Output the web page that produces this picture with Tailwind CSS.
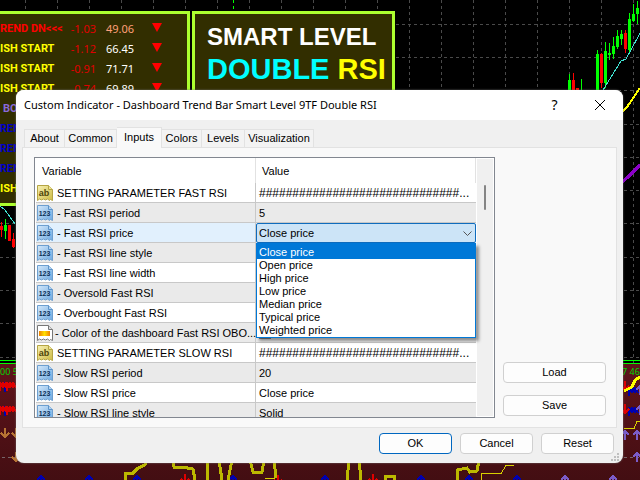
<!DOCTYPE html>
<html lang="en">
<head>
    <meta charset="UTF-8">
    <meta name="viewport" content="width=device-width, initial-scale=1.0">
    <title>Custom Indicator</title>
    <script src="https://cdn.jsdelivr.net/npm/@tailwindcss/browser@4"></script>
</head>
<body class="relative min-h-screen overflow-hidden bg-black font-['Liberation_Sans',Arial,sans-serif] text-[11px] text-black">

    <!-- Shared icons -->
    <svg class="absolute h-0 w-0">
        <defs>
            <linearGradient id="blue" x1="0" y1="0" x2="1" y2="1"><stop offset="0" stop-color="#d3e8fb"/><stop offset="1" stop-color="#6ea9e0"/></linearGradient>
            <linearGradient id="gold" x1="0" y1="0" x2="1" y2="1"><stop offset="0" stop-color="#f8f1b4"/><stop offset="1" stop-color="#cdbb45"/></linearGradient>
            <linearGradient id="swatch" x1="0" x2="1"><stop offset="0" stop-color="#f08000"/><stop offset=".5" stop-color="#ffe000"/><stop offset="1" stop-color="#f08000"/></linearGradient>
            <linearGradient id="redzone" x1="0" y1="0" x2="0" y2="1"><stop offset="0" stop-color="#60131b"/><stop offset="1" stop-color="#430e12"/></linearGradient>
            <symbol id="icon-num" viewBox="0 0 16 16">
                <path d="M.5.5h11l4 4v11l-2-1-1 1-2-1.500-2 1-2-1-2 1-2-1-2 1.500z" fill="url(#blue)" stroke="#6d9fd0"/>
                <path d="M11.500.5v4h4" fill="#b5d4f0" stroke="#5d93c8"/>
                <text x="7.500" y="11" text-anchor="middle" font-family="Liberation Sans" font-size="7" font-weight="bold" fill="#0d3055">123</text>
            </symbol>
            <symbol id="icon-str" viewBox="0 0 16 16">
                <path d="M.5.5h11l4 4v11l-2-1-1 1-2-1.500-2 1-2-1-2 1-2-1-2 1.500z" fill="url(#gold)" stroke="#b5a545"/>
                <path d="M11.500.5v4h4" fill="#efe69a" stroke="#b5a545"/>
                <text x="7" y="11" text-anchor="middle" font-family="Liberation Sans" font-size="9" font-weight="bold" fill="#4e4508">ab</text>
            </symbol>
            <symbol id="icon-color" viewBox="0 0 16 16">
                <path d="M.5.5h11l4 4v11l-2-1-1 1-2-1.500-2 1-2-1-2 1-2-1-2 1.500z" fill="#fff" stroke="#777"/>
                <path d="M11.500.5v4h4" fill="#ddd" stroke="#777"/>
                <rect x="2" y="6" width="11" height="5" fill="url(#swatch)"/>
            </symbol>
            <path id="up" d="M0 10V1M-4 5L0 1L4 5" fill="none" stroke-width="2.500"/>
            <path id="down" d="M0-5V4M-4 0L0 4L4 0" fill="none" stroke-width="2.500"/>
            <path id="bars" d="M0 5V-4l3 6v-6l3 6v-6l3 6" fill="none" stroke-width="2"/>
        </defs>
    </svg>

    <!-- Chart behind the dialog -->
    <svg class="absolute inset-0 h-full w-full" viewBox="0 0 640 480" preserveAspectRatio="xMinYMin slice" shape-rendering="crispEdges">
        <g stroke="#4a4a4a" stroke-dasharray="3 3">
            <path d="M25.500 0V364M57.500 0V364M89.500 0V364M121.500 0V364M153.500 0V364M185.500 0V364M217.500 0V364M249.500 0V364M281.500 0V364M313.500 0V364M345.500 0V364M377.500 0V364M409.500 0V364M441.500 0V364M473.500 0V364M505.500 0V364M537.500 0V364M569.500 0V364M601.500 0V364M633.500 0V364"/>
            <path d="M0 24.500H640M0 57.500H640M0 90.500H640M0 124.500H640M0 157.500H640M0 190.500H640M0 223.500H640M0 257.500H640M0 290.500H640M0 323.500H640M0 357.500H640"/>
            <path d="M233.500 0V90" stroke="#00ff00"/>
        </g>

        <!-- Candles, right -->
        <path d="M569.500 74V90M581.500 79V90M597.500 50V90M605.500 42V88M609.500 43V60M613.500 37V59M617.500 30V49M621.500 30V45M629.500 13V52M633.500 4V22M637.500 1V24" stroke="#00ff00"/>
        <path d="M573.500 73V90M601.500 53V88M625.500 30V53" stroke="#ff0000"/>
        <path d="M568 80h3v10h-3zM596 54h3v36h-3zM604 51h3v32h-3zM608 53h3v2h-3zM612 46h3v8h-3zM616 36h3v11h-3zM620 34h3v5h-3zM628 19h3v31h-3zM632 14h3v7h-3zM636 8h3v6h-3z" fill="#00ff00"/>
        <path d="M572 80h3v10h-3zM576 88h3v2h-3zM600 54h3v29h-3zM624 33h3v16h-3z" fill="#ff0000"/>
        <path d="M603 90L621 61L626 59L631 50L640 33M0 206L5 210L15 224" fill="none" stroke="#40e0d0"/>
        <path d="M622 112L627 107L640 88" fill="none" stroke="#ffff00" stroke-width="2"/>
        <path d="M622 182L628 177L640 165" fill="none" stroke="#8b00c8" stroke-width="3"/>

        <!-- Candles, left -->
        <path d="M1.500 222V237M13.500 233V248" stroke="#ff0000"/>
        <path d="M0 226h3v4h-3zM8 225h3v16h-3zM12 239h3v8h-3z" fill="#ff0000"/>
        <path d="M5.500 219V239" stroke="#00ff00"/>
        <path d="M4 225h3v6h-3z" fill="#00ff00"/>

        <!-- Lower indicator window -->
        <rect y="364" width="640" height="116" fill="url(#redzone)"/>
        <path d="M0 360.500H640M0 363.500H640" stroke="#00ff00"/>
        <path d="M2 457.500H16M624 457.500H640" stroke="#77656a" stroke-dasharray="3 3"/>
        <g fill="#00d800" font-family="Noto Sans" font-size="9">
            <text x="0" y="375">00 5</text>
            <text x="622" y="375">7 46</text>
        </g>
        <g stroke="#0000b0">
            <use href="#up" x="5" y="382"/><use href="#up" x="5" y="406"/>
            <use href="#bars" x="629" y="391"/><use href="#bars" x="629" y="411"/>
            <use href="#up" x="41" y="475"/><use href="#up" x="89" y="475"/><use href="#up" x="137" y="475"/><use href="#up" x="233" y="475"/>
            <use href="#up" x="325" y="475"/><use href="#up" x="421" y="475"/><use href="#up" x="469" y="475"/><use href="#up" x="517" y="475"/>
        </g>
        <g stroke="#e00000">
            <use href="#bars" x="0" y="386"/><use href="#bars" x="7" y="386"/>
            <use href="#bars" x="0" y="410"/><use href="#bars" x="7" y="410"/>
            <use href="#down" x="625" y="386"/><use href="#down" x="625" y="409"/>
            <use href="#down" x="185" y="479"/><use href="#down" x="278" y="480"/><use href="#down" x="373" y="479"/>
        </g>
        <g stroke="#b87333">
            <use href="#down" x="5" y="433"/><use href="#down" x="16" y="433"/><use href="#down" x="16" y="457"/>
        </g>
        <g stroke="#7b5cc8">
            <use href="#up" x="625" y="430"/><use href="#up" x="637" y="430"/><use href="#up" x="637" y="452"/>
            <use href="#up" x="565" y="475"/><use href="#up" x="613" y="475"/><use href="#up" x="640" y="385"/><use href="#up" x="640" y="405"/>
        </g>
        <path d="M624 391L632 387L635 380L640 377" fill="none" stroke="#ffff00" stroke-width="3"/>
        <g fill="none" stroke="#bcb800" stroke-width="3">
            <path d="M125 480V473H133L138 468L145 465L147 460M173 460L174 467H182L193 469L195 480M208 460L207 480M219 460L222 480M228 480L232 460M250 460L253 472H262L264 460M274 460L276 478M349 460L347 480M359 460L361 480M385 480V476H394V480M457 480V470L467 468L470 472L477 471L479 460"/>
            <path d="M89 480H97M265 478.500H275M481 480V473.500H501L506 465.500H514M624 428.500H634L637 421.500H640" stroke="#d8d000" stroke-width="1"/>
        </g>
    </svg>

    <!-- Trend dashboard -->
    <section class="absolute top-[11px] left-0 h-[195px] w-[190px] border-3 border-l-0 border-[#adff2f] bg-[#322e00] pt-[5px] font-['Roboto',sans-serif] text-[11px] leading-5 font-bold whitespace-nowrap text-[#ffff00]">
        <div class="grid grid-cols-[58px_38px_38px_1fr]">
            <span class="text-[#ff0000]">REND DN&lt;&lt;&lt;</span>
            <span class="text-right font-['Noto_Sans',sans-serif] font-normal text-[#e00000]">-1.03</span>
            <span class="text-right font-['Noto_Sans',sans-serif] font-normal text-[#ffa07a]">49.06</span>
            <svg class="mt-1 ml-[18px] h-[9px] w-2.5 fill-[#ff0000]" viewBox="0 0 10 9"><path d="M0 0H10L5 9z"/></svg>

            <span>ISH START</span>
            <span class="text-right font-['Noto_Sans',sans-serif] font-normal text-[#e00000]">-1.12</span>
            <span class="text-right font-['Noto_Sans',sans-serif] font-normal text-white">66.45</span>
            <svg class="mt-1 ml-[18px] h-[9px] w-2.5 fill-[#ff0000]" viewBox="0 0 10 9"><path d="M0 0H10L5 9z"/></svg>

            <span>ISH START</span>
            <span class="text-right font-['Noto_Sans',sans-serif] font-normal text-[#e00000]">-0.91</span>
            <span class="text-right font-['Noto_Sans',sans-serif] font-normal text-white">71.71</span>
            <svg class="mt-1 ml-[18px] h-[9px] w-2.5 fill-[#ff0000]" viewBox="0 0 10 9"><path d="M0 0H10L5 9z"/></svg>

            <span>ISH START</span>
            <span class="text-right font-['Noto_Sans',sans-serif] font-normal text-[#e00000]">-0.74</span>
            <span class="text-right font-['Noto_Sans',sans-serif] font-normal text-white">69.89</span>
            <svg class="mt-1 ml-[18px] h-[9px] w-2.5 fill-[#ff0000]" viewBox="0 0 10 9"><path d="M0 0H10L5 9z"/></svg>
        </div>
        <p class="pl-[3px] text-[#8a6ad8]">BO</p>
        <p class="text-[#0000c8]">REN</p>
        <p class="text-[#0000c8]">REN</p>
        <p class="text-[#0000c8]">REN</p>
        <p>ISH</p>
    </section>

    <section class="absolute top-[11px] left-48 h-24 w-[203px] border-3 border-[#adff2f] bg-[#322e00] pt-[7px] pl-3 font-bold whitespace-nowrap">
        <p class="text-2xl leading-8 text-white">SMART LEVEL</p>
        <p class="text-[29px] leading-8 text-[#00ffff]">DOUBLE <span class="text-[#ffff00]">RSI</span></p>
    </section>

    <!-- Dialog -->
    <main role="dialog" aria-labelledby="title" class="relative mt-[90px] mr-[17px] ml-4 overflow-hidden rounded-lg bg-[#f0f0f0] shadow-[0_0_2px_#777]">
        <header class="flex h-[30px] items-center bg-white pl-2">
            <h1 id="title" class="flex-1 font-['Noto_Sans',sans-serif] text-[11px] whitespace-nowrap">Custom Indicator - Dashboard Trend Bar Smart Level 9TF Double RSI</h1>
            <button aria-label="Help" class="w-[45px] font-['Noto_Sans',sans-serif] text-sm leading-5">?</button>
            <button aria-label="Close" class="flex w-[46px] justify-center">
                <svg class="h-2.5 w-2.5" viewBox="0 0 10 10" stroke="#000"><path d="M0 0L10 10M10 0L0 10"/></svg>
            </button>
        </header>

        <div role="tablist" class="flex h-[27px] items-end pl-2">
            <button role="tab" class="h-[18px] w-[41px] border border-b-0 border-[#e2e2e2] bg-[#f3f3f3]">About</button>
            <button role="tab" class="h-[18px] w-[52px] border border-b-0 border-l-0 border-[#e2e2e2] bg-[#f3f3f3]">Common</button>
            <button role="tab" aria-selected="true" class="relative -mb-px h-[21px] w-[45px] border border-b-0 border-l-0 border-[#e2e2e2] bg-[#f9f9f9] pb-0.5">Inputs</button>
            <button role="tab" class="h-[18px] w-10 border border-b-0 border-l-0 border-[#e2e2e2] bg-[#f3f3f3]">Colors</button>
            <button role="tab" class="h-[18px] w-[43px] border border-b-0 border-l-0 border-[#e2e2e2] bg-[#f3f3f3]">Levels</button>
            <button role="tab" class="h-[18px] w-[69px] border border-b-0 border-l-0 border-[#e2e2e2] bg-[#f3f3f3]">Visualization</button>
        </div>

        <div role="tabpanel" class="mx-1.5 flex gap-2 border border-[#e2e2e2] bg-[#f9f9f9] pt-[9px] pr-2.5 pb-[9px] pl-[11px]">
            <div class="flex h-[261px] min-w-0 flex-1 overflow-hidden border border-[#828790] bg-white pl-px">
                <div class="min-w-0 flex-1">
                    <table class="w-full table-fixed border-separate border-spacing-0 text-left whitespace-nowrap">
                        <colgroup><col class="w-[220px]"><col></colgroup>
                        <thead>
                            <tr class="h-[25px]">
                                <th class="border-r border-[#e2e2e2] pt-px pl-1.5 font-normal">Variable</th>
                                <th class="border-r border-[#e2e2e2] pt-px pl-1.5 font-normal">Value</th>
                            </tr>
                        </thead>
                        <tbody>
                            <tr class="h-5">
                                <td class="border-r border-b border-[#c8c8c8] pt-px"><div class="flex items-center gap-1 pl-px"><svg class="h-4 w-4"><use href="#icon-str"/></svg>SETTING PARAMETER FAST RSI</div></td>
                                <td class="border-b border-[#c8c8c8] pt-px pl-[3px] text-xs">##############################...</td>
                            </tr>
                            <tr class="h-5 bg-[#eaeaea]">
                                <td class="border-r border-b border-[#c8c8c8] pt-px"><div class="flex items-center gap-1 pl-px"><svg class="h-4 w-4"><use href="#icon-num"/></svg>- Fast RSI period</div></td>
                                <td class="border-b border-[#c8c8c8] pt-px pl-[3px]">5</td>
                            </tr>
                            <tr class="h-5 bg-[#e1f0fd]">
                                <td class="border-r border-b border-[#c8c8c8] pt-px"><div class="flex items-center gap-1 pl-px"><svg class="h-4 w-4"><use href="#icon-num"/></svg><label for="price">- Fast RSI price</label></div></td>
                                <td class="relative">
                                    <select id="price" class="block h-5 w-full appearance-none rounded-xs border border-[#0f6cbd] bg-[#cce4f7] pt-px pl-0.5 leading-none">
                                        <option>Close price</option>
                                    </select>
                                    <svg class="pointer-events-none absolute top-2 right-1 h-[5px] w-[9px]" viewBox="0 0 9 5" fill="none" stroke="#555"><path d="M.5.5L4.500 4.500L8.500.5"/></svg>
                                    <ul role="listbox" class="absolute top-full right-0 left-0 z-10 border border-t-3 border-[#0078d7] bg-white leading-[13px] shadow-[3px_3px_3px_#0006]">
                                        <li role="option" aria-selected="true" class="bg-[#0078d7] pl-0.5 text-white">Close price</li>
                                        <li role="option" class="pl-0.5">Open price</li>
                                        <li role="option" class="pl-0.5">High price</li>
                                        <li role="option" class="pl-0.5">Low price</li>
                                        <li role="option" class="pl-0.5">Median price</li>
                                        <li role="option" class="pl-0.5">Typical price</li>
                                        <li role="option" class="pl-0.5">Weighted price</li>
                                    </ul>
                                </td>
                            </tr>
                            <tr class="h-5 bg-[#eaeaea]">
                                <td class="border-r border-b border-[#c8c8c8] pt-px"><div class="flex items-center gap-1 pl-px"><svg class="h-4 w-4"><use href="#icon-num"/></svg>- Fast RSI line style</div></td>
                                <td class="border-b border-[#c8c8c8]"></td>
                            </tr>
                            <tr class="h-5">
                                <td class="border-r border-b border-[#c8c8c8] pt-px"><div class="flex items-center gap-1 pl-px"><svg class="h-4 w-4"><use href="#icon-num"/></svg>- Fast RSI line width</div></td>
                                <td class="border-b border-[#c8c8c8]"></td>
                            </tr>
                            <tr class="h-5 bg-[#eaeaea]">
                                <td class="border-r border-b border-[#c8c8c8] pt-px"><div class="flex items-center gap-1 pl-px"><svg class="h-4 w-4"><use href="#icon-num"/></svg>- Oversold Fast RSI</div></td>
                                <td class="border-b border-[#c8c8c8]"></td>
                            </tr>
                            <tr class="h-5">
                                <td class="border-r border-b border-[#c8c8c8] pt-px"><div class="flex items-center gap-1 pl-px"><svg class="h-4 w-4"><use href="#icon-num"/></svg>- Overbought Fast RSI</div></td>
                                <td class="border-b border-[#c8c8c8]"></td>
                            </tr>
                            <tr class="h-5 bg-[#eaeaea]">
                                <td class="border-r border-b border-[#c8c8c8] pt-px"><div class="flex items-center gap-0.5 pl-px"><svg class="h-4 w-4 shrink-0"><use href="#icon-color"/></svg>- Color of the dashboard Fast RSI OBO...</div></td>
                                <td class="border-b border-[#c8c8c8] pl-[3px]"><div class="h-3 w-3 border border-[#888] bg-white"></div></td>
                            </tr>
                            <tr class="h-5">
                                <td class="border-r border-b border-[#c8c8c8] pt-px"><div class="flex items-center gap-1 pl-px"><svg class="h-4 w-4"><use href="#icon-str"/></svg>SETTING PARAMETER SLOW RSI</div></td>
                                <td class="border-b border-[#c8c8c8] pt-px pl-[3px] text-xs">##############################...</td>
                            </tr>
                            <tr class="h-5 bg-[#eaeaea]">
                                <td class="border-r border-b border-[#c8c8c8] pt-px"><div class="flex items-center gap-1 pl-px"><svg class="h-4 w-4"><use href="#icon-num"/></svg>- Slow RSI period</div></td>
                                <td class="border-b border-[#c8c8c8] pt-px pl-[3px]">20</td>
                            </tr>
                            <tr class="h-5">
                                <td class="border-r border-b border-[#c8c8c8] pt-px"><div class="flex items-center gap-1 pl-px"><svg class="h-4 w-4"><use href="#icon-num"/></svg>- Slow RSI price</div></td>
                                <td class="border-b border-[#c8c8c8] pt-px pl-[3px]">Close price</td>
                            </tr>
                            <tr class="h-5 bg-[#eaeaea]">
                                <td class="border-r border-b border-[#c8c8c8] pt-px"><div class="flex items-center gap-1 pl-px"><svg class="h-4 w-4"><use href="#icon-num"/></svg>- Slow RSI line style</div></td>
                                <td class="border-b border-[#c8c8c8] pt-px pl-[3px]">Solid</td>
                            </tr>
                        </tbody>
                    </table>
                </div>
                <!-- Scrollbar -->
                <div class="my-px mr-px ml-px w-4 bg-[#f0f0f0] pt-[26px]">
                    <div class="mx-auto h-[25px] w-0.5 rounded-full bg-[#858585]"></div>
                </div>
            </div>
            <div class="flex w-[103px] flex-col justify-end gap-3 pb-0.5">
                <button class="h-[21px] rounded border border-[#d0d0d0] bg-[#fdfdfd]">Load</button>
                <button class="h-[21px] rounded border border-[#d0d0d0] bg-[#fdfdfd]">Save</button>
            </div>
        </div>

        <footer class="flex justify-end gap-2 pt-[5px] pr-[9px] pb-[9px]">
            <button class="h-[21px] w-[73px] rounded border border-[#0067c0] bg-[#fdfdfd]">OK</button>
            <button class="h-[21px] w-[73px] rounded border border-[#d0d0d0] bg-[#fdfdfd]">Cancel</button>
            <button class="h-[21px] w-[73px] rounded border border-[#d0d0d0] bg-[#fdfdfd]">Reset</button>
        </footer>
        <svg class="absolute right-1 bottom-0.5 h-2 w-2" viewBox="0 0 8 8" fill="#bfbfbf"><path d="M6 0h2v2h-2zM3 3h2v2h-2zM6 3h2v2h-2zM0 6h2v2h-2zM3 6h2v2h-2zM6 6h2v2h-2z"/></svg>
    </main>
</body>
</html>
